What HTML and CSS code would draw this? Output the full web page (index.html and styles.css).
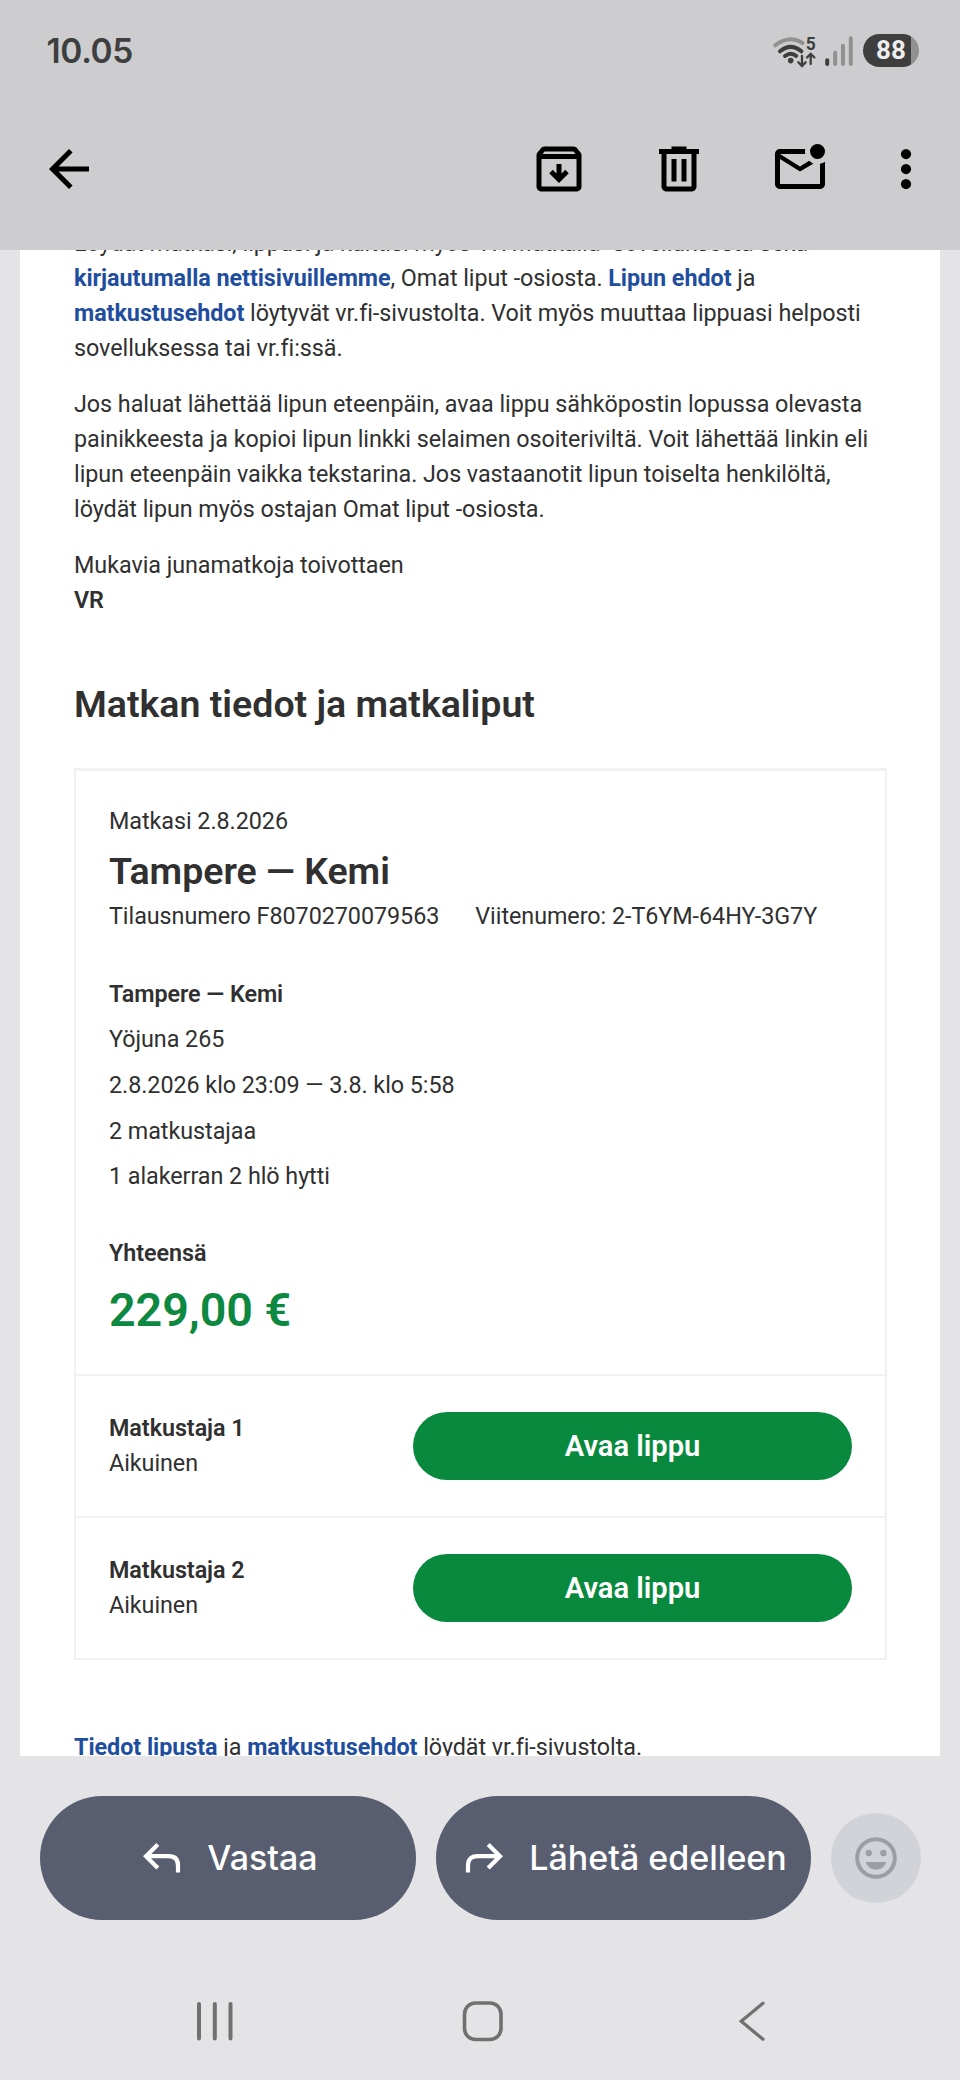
FILE: index.html
```html
<!DOCTYPE html>
<html lang="fi">
<head>
<meta charset="utf-8">
<title>VR</title>
<link rel="stylesheet" href="styles.css">
</head>
<body>
<div class="screen">
  <header class="top">
    <div class="status">
      <span class="clock">10.05</span>
      <div class="indicators">
        <svg class="wifi" width="48" height="36" viewBox="770 32 48 36" fill="none" stroke="#3e3e3f" stroke-width="4" stroke-linecap="round">
          <path d="M774.3 44.3Q788 33.500 801.500 42" stroke="#919192"/>
          <path d="M779 50.300Q789.700 41.500 800.400 50.300"/>
          <path d="M784 55Q789.700 50.500 795.200 54.800"/>
          <circle cx="789.700" cy="59.600" r="2.800" fill="#3e3e3f" stroke="none"/>
          <path d="M801 55v9.500M797.300 61.300l3.700 3.700 3.700-3.700M809.700 63v-9.800M806 56.500l3.700-3.700 3.700 3.700" stroke-width="2.300"/>
          <text class="band" x="804.800" y="49">5</text>
        </svg>
        <svg class="signal" width="28" height="32" viewBox="824.500 35 28 32" stroke="#919192" stroke-width="4" stroke-linecap="round">
          <path d="M826.700 60.200v3.800" stroke="#3e3e3f"/>
          <path d="M834.700 52.800V64M842.500 45.800V64M850.300 38.200V64"/>
        </svg>
        <div class="battery"><span>88</span></div>
      </div>
    </div>
    <nav class="toolbar">
      <svg class="icon" viewBox="0 0 24 24"><path d="M7.825 13 13.425 18.600 12 20 4 12l8-8 1.425 1.400L7.825 11H20v2z"/></svg>
      <div class="actions">
        <svg class="icon" viewBox="0 0 24 24"><path d="M12 17.600l3.900-3.900-1.400-1.400-1.500 1.500V10h-2v3.800l-1.500-1.500-1.400 1.400zM5 8v11h14V8H5zm0 13c-.55 0-1.020-.2-1.410-.59C3.200 20.020 3 19.550 3 19V6.520c0-.23.040-.45.110-.66s.18-.4.340-.58L4.700 3.750c.18-.23.410-.42.680-.55.260-.13.550-.2.840-.2h11.550c.3 0 .58.070.85.200.26.130.49.310.68.550l1.250 1.530c.15.180.26.380.34.580.07.210.11.430.11.660V19c0 .55-.2 1.020-.59 1.410-.39.390-.86.590-1.410.59H5zM5.400 6h13.200l-.85-1H6.250z" fill-rule="evenodd"/></svg>
        <svg class="icon" viewBox="0 0 24 24"><path d="M7 21c-.55 0-1.020-.2-1.410-.59C5.200 20.020 5 19.550 5 19V6H4V4h5V3h6v1h5v2h-1v13c0 .55-.2 1.020-.59 1.410-.39.390-.86.590-1.410.590zM17 6H7v13h10zM9 17h2V8H9zm4 0h2V8h-2z" fill-rule="evenodd"/></svg>
        <svg class="icon" viewBox="0 0 24 24"><path d="M4 20c-.55 0-1.020-.2-1.410-.59C2.200 19.020 2 18.550 2 18V6c0-.55.2-1.020.59-1.410C2.980 4.200 3.450 4 4 4h10.100c-.07.330-.1.670-.1 1s.03.670.1 1H4l8 5 3.650-2.280c.27.250.55.460.86.650.3.180.63.340.97.460L12 13 4 8v10h16V9.900c.37-.08.710-.19 1.040-.33.330-.14.650-.31.960-.52V18c0 .55-.2 1.020-.59 1.410-.39.390-.86.590-1.410.590z"/><circle cx="19" cy="5" r="3"/></svg>
        <svg class="icon more" viewBox="0 0 24 24"><circle cx="12" cy="6" r="2.050"/><circle cx="12" cy="12" r="2.050"/><circle cx="12" cy="18" r="2.050"/></svg>
      </div>
    </nav>
  </header>

  <main class="viewport">
    <article class="mail">
      <p class="intro">Löydät matkasi, lippusi ja kuittisi myös VR Matkalla -sovelluksesta sekä<br><a>kirjautumalla nettisivuillemme</a>, Omat liput -osiosta. <a>Lipun ehdot</a> ja<br><a>matkustusehdot</a> löytyvät vr.fi-sivustolta. Voit myös muuttaa lippuasi helposti<br>sovelluksessa tai vr.fi:ssä.</p>
      <p>Jos haluat lähettää lipun eteenpäin, avaa lippu sähköpostin lopussa olevasta<br>painikkeesta ja kopioi lipun linkki selaimen osoiteriviltä. Voit lähettää linkin eli<br>lipun eteenpäin vaikka tekstarina. Jos vastaanotit lipun toiselta henkilöltä,<br>löydät lipun myös ostajan Omat liput -osiosta.</p>
      <p>Mukavia junamatkoja toivottaen<br><b>VR</b></p>
      <h2 class="heading">Matkan tiedot ja matkaliput</h2>
      <section class="card">
        <div class="trip">
          <div class="date">Matkasi 2.8.2026</div>
          <h2 class="route">Tampere — Kemi</h2>
          <div class="refs"><span>Tilausnumero F8070270079563</span><span>Viitenumero: 2-T6YM-64HY-3G7Y</span></div>
          <ul class="details">
            <li><b>Tampere — Kemi</b></li>
            <li>Yöjuna 265</li>
            <li>2.8.2026 klo 23:09 — 3.8. klo 5:58</li>
            <li>2 matkustajaa</li>
            <li>1 alakerran 2 hlö hytti</li>
          </ul>
          <div class="total"><b>Yhteensä</b></div>
          <div class="price">229,00 €</div>
        </div>
        <div class="passenger"><div><b>Matkustaja 1</b><br>Aikuinen</div><a class="open">Avaa lippu</a></div>
        <div class="passenger"><div><b>Matkustaja 2</b><br>Aikuinen</div><a class="open">Avaa lippu</a></div>
      </section>
      <p class="after"><a>Tiedot lipusta</a> ja <a>matkustusehdot</a> löydät vr.fi-sivustolta.</p>
    </article>
  </main>

  <footer class="bottom">
    <div class="replies">
      <div class="pill"><svg width="38" height="30" viewBox="0 0 38 30" fill="none" stroke="#fff" stroke-width="4.200"><path d="M14.800 1.500 3 13.200l11.800 11.700M3 13.200h22.500q9.500 0 9.500 9.300v7"/></svg><span class="reply">Vastaa</span></div>
      <div class="pill"><svg width="38" height="30" viewBox="0 0 38 30" fill="none" stroke="#fff" stroke-width="4.200"><path d="M23.200 1.500 35 13.200 23.200 24.900M35 13.200H12.500Q3 13.200 3 22.500v7"/></svg><span class="forward">Lähetä edelleen</span></div>
      <div class="emoji"><svg width="42" height="42" viewBox="0 0 42 42" fill="#9b9ea4"><circle cx="21" cy="21" r="18.800" fill="none" stroke="#9b9ea4" stroke-width="4"/><circle cx="13.700" cy="16" r="3.200"/><circle cx="28.400" cy="16" r="3.200"/><path d="M10.800 25h20.400c-1.500 5-5.500 7.600-10.200 7.600S12.300 30 10.800 25z"/></svg></div>
    </div>
    <div class="navbar">
      <svg width="40" height="42" viewBox="194.500 2000 40 42" stroke="#707071" stroke-width="4" stroke-linecap="round"><path d="M198.500 2004v34.500M214.300 2004v34.500M230 2004v34.500"/></svg>
      <svg class="home" width="42" height="42" viewBox="0 0 42 42"><rect x="2.500" y="3" width="36.500" height="36.500" rx="11" fill="none" stroke="#707071" stroke-width="3.600"/></svg>
      <svg width="28" height="42" viewBox="0 0 28 42" fill="none" stroke="#707071" stroke-width="3.300" stroke-linecap="round"><path d="M24 3.200 2.200 21.300 24 39.300"/></svg>
    </div>
  </footer>
</div>
</body>
</html>
```
FILE: styles.css
```css
* { box-sizing: border-box; }
body { margin: 0; background: #e4e4e6; }
svg { display: block; flex: none; }
.screen {
  width: 960px;
  height: 2080px;
  display: flex;
  flex-direction: column;
  overflow: hidden;
  background: #e4e4e6;
  font-family: Roboto, sans-serif;
  color: #303030;
}

/* Status bar and message toolbar */
.top { height: 250px; flex: none; background: #cdcdcf; }
.status {
  height: 101px;
  padding: 0 41px 0 46.500px;
  display: flex;
  align-items: center;
  justify-content: space-between;
}
.clock {
  font: 600 33.500px/40px Inter, sans-serif;
  letter-spacing: -0.350px;
  color: #3e3e3f;
}
.indicators { display: flex; align-items: center; }
.band { font: 700 17.500px Roboto, sans-serif; fill: #3e3e3f; stroke: none; }
.signal { margin: 1px 0 0 6.500px; }
.battery {
  margin-left: 10px;
  width: 56px;
  height: 33px;
  border-radius: 16.500px;
  background: linear-gradient(90deg, #3e3e3f 48.500px, #919192 48.500px);
  color: #ededee;
  text-align: center;
  font: 700 26px/33px Roboto, sans-serif;
}
.toolbar {
  height: 136px;
  padding: 0 24.500px 0 38.500px;
  display: flex;
  align-items: center;
  justify-content: space-between;
}
.icon { width: 60px; height: 60px; }
.actions { display: flex; gap: 60.500px; }
.more { margin-left: -14.500px; }

/* Message body */
.viewport { height: 1506px; flex: none; padding: 0 20px; overflow: hidden; }
.mail {
  height: 1506px;
  padding: 0 53px 0 54px;
  overflow: hidden;
  background: #fff;
  font-size: 23.330px;
  line-height: 35px;
  letter-spacing: -0.045px;
  white-space: nowrap;
}
.mail p { margin: 0 0 21px; }
.mail .intro { margin-top: -24px; }
.mail b { font-weight: 600; }
.mail p a { font-weight: 700; color: #1f4e9f; }
.heading, .route { margin: 0; font-size: 37.500px; line-height: 44px; font-weight: 600; letter-spacing: 0; }
.heading { margin-top: 63.500px; }
.card { margin-top: 42.500px; border: 2px solid #f1f1f1; border-top-width: 3px; }
.trip { height: 603px; padding: 33px 33px 0; }
.route { margin-top: 10px; }
.refs { margin-top: 5.500px; display: flex; gap: 36px; }
.details { list-style: none; margin: 38px 0 0; padding: 0; line-height: 45.700px; }
.total { margin-top: 36px; }
.price { margin-top: 9px; font-size: 46.670px; line-height: 60px; font-weight: 600; color: #0c8840; }
.passenger {
  height: 142px;
  padding: 0 33px;
  border-top: 2px solid #f1f1f1;
  display: flex;
  align-items: center;
  justify-content: space-between;
}
.open {
  width: 439px;
  height: 68px;
  border-radius: 34px;
  background: #08893e;
  color: #fff;
  font-size: 29.170px;
  line-height: 68px;
  font-weight: 600;
  text-align: center;
}
.mail .after { margin-top: 69.500px; }

/* Reply actions and system navigation */
.bottom { flex: 1; padding-top: 40px; }
.replies { display: flex; align-items: center; gap: 20px; padding: 0 40px; }
.pill {
  width: 375.500px;
  height: 124px;
  padding-left: 5px;
  flex: none;
  border-radius: 62px;
  background: #585e70;
  color: #fff;
  display: flex;
  align-items: center;
  justify-content: center;
  gap: 26.500px;
  font: 500 34px/44px Inter, sans-serif;
  white-space: nowrap;
}
.emoji {
  width: 89.500px;
  height: 89.500px;
  flex: none;
  border-radius: 50%;
  background: #d2d3d8;
  display: grid;
  place-items: center;
}
.navbar {
  margin-top: 80px;
  padding: 0 193px 0 194.500px;
  display: flex;
  justify-content: space-between;
}
.home { margin-right: 7px; }
```
